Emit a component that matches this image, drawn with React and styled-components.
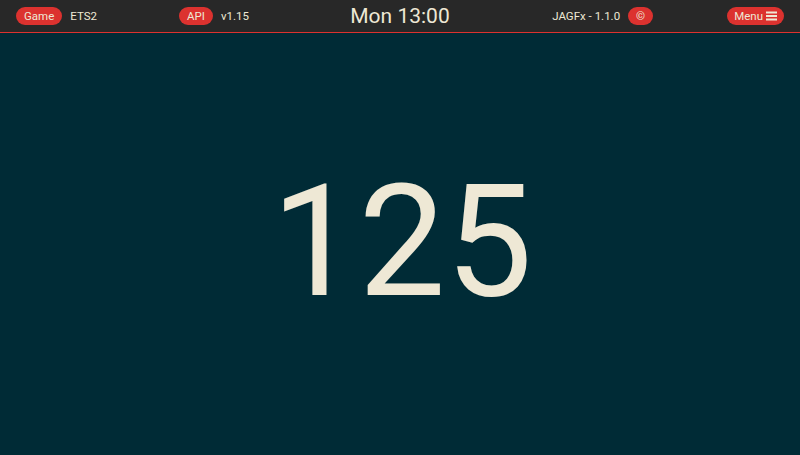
import React from "react";
import styled, { createGlobalStyle } from "styled-components";

const Global = createGlobalStyle`
  html, body { margin: 0; padding: 0; height: 100%; }
  body { font-family: Roboto, "Liberation Sans", sans-serif; background: #002b36; }
  #root { height: 100%; }
`;

const Page = styled.div`
  display: flex;
  flex-direction: column;
  height: 455px;
  background: #002b36;
  color: #eee8d5;
`;

const Header = styled.header`
  display: grid;
  grid-template-columns: 1fr auto 1fr;
  align-items: center;
  height: 33px;
  padding: 0 16px;
  background: #282828;
  border-bottom: 1px solid #dc322f;
  box-sizing: border-box;
  flex: none;
`;

const Side = styled.div`
  display: flex;
  align-items: center;
  justify-content: ${(p) => (p.$right ? "flex-end" : "flex-start")};
  gap: ${(p) => p.$gap}px;
`;

const Group = styled.div`
  display: flex;
  align-items: center;
  gap: 8px;
`;

const Pill = styled.span`
  display: inline-flex;
  align-items: center;
  justify-content: center;
  gap: 3px;
  height: 18px;
  padding: 0 ${(p) => p.$px ?? 8}px;
  border-radius: 9px;
  background: #dc322f;
  color: #eee8d5;
  font-size: 11.5px;
  line-height: 18px;
`;

const Label = styled.span`
  font-size: 11.5px;
  color: #eee8d5;
`;

const Clock = styled.div`
  font-size: 21px;
  color: #eee8d5;
  text-align: center;
`;

const Main = styled.main`
  flex: 1;
  display: flex;
  align-items: center;
  justify-content: center;
`;

const Speed = styled.div`
  font-size: 155px;
  line-height: 1;
  color: #eee8d5;
  margin-top: -4px;
  margin-left: 4px;
`;

const Burger = () => (
  <svg width="11" height="10" viewBox="0 0 11 10">
    <rect x="0" y="0.5" width="11" height="2" fill="#eee8d5" />
    <rect x="0" y="4" width="11" height="2" fill="#eee8d5" />
    <rect x="0" y="7.5" width="11" height="2" fill="#eee8d5" />
  </svg>
);

export default function App() {
  return (
    <Page>
      <Global />
      <Header>
        <Side $gap={82}>
          <Group>
            <Pill>Game</Pill>
            <Label>ETS2</Label>
          </Group>
          <Group>
            <Pill>API</Pill>
            <Label>v1.15</Label>
          </Group>
        </Side>
        <Clock>Mon 13:00</Clock>
        <Side $right $gap={74}>
          <Group>
            <Label>JAGFx - 1.1.0</Label>
            <Pill $px={8}>©</Pill>
          </Group>
          <Pill $px={7}>
            Menu <Burger />
          </Pill>
        </Side>
      </Header>
      <Main>
        <Speed>125</Speed>
      </Main>
    </Page>
  );
}
